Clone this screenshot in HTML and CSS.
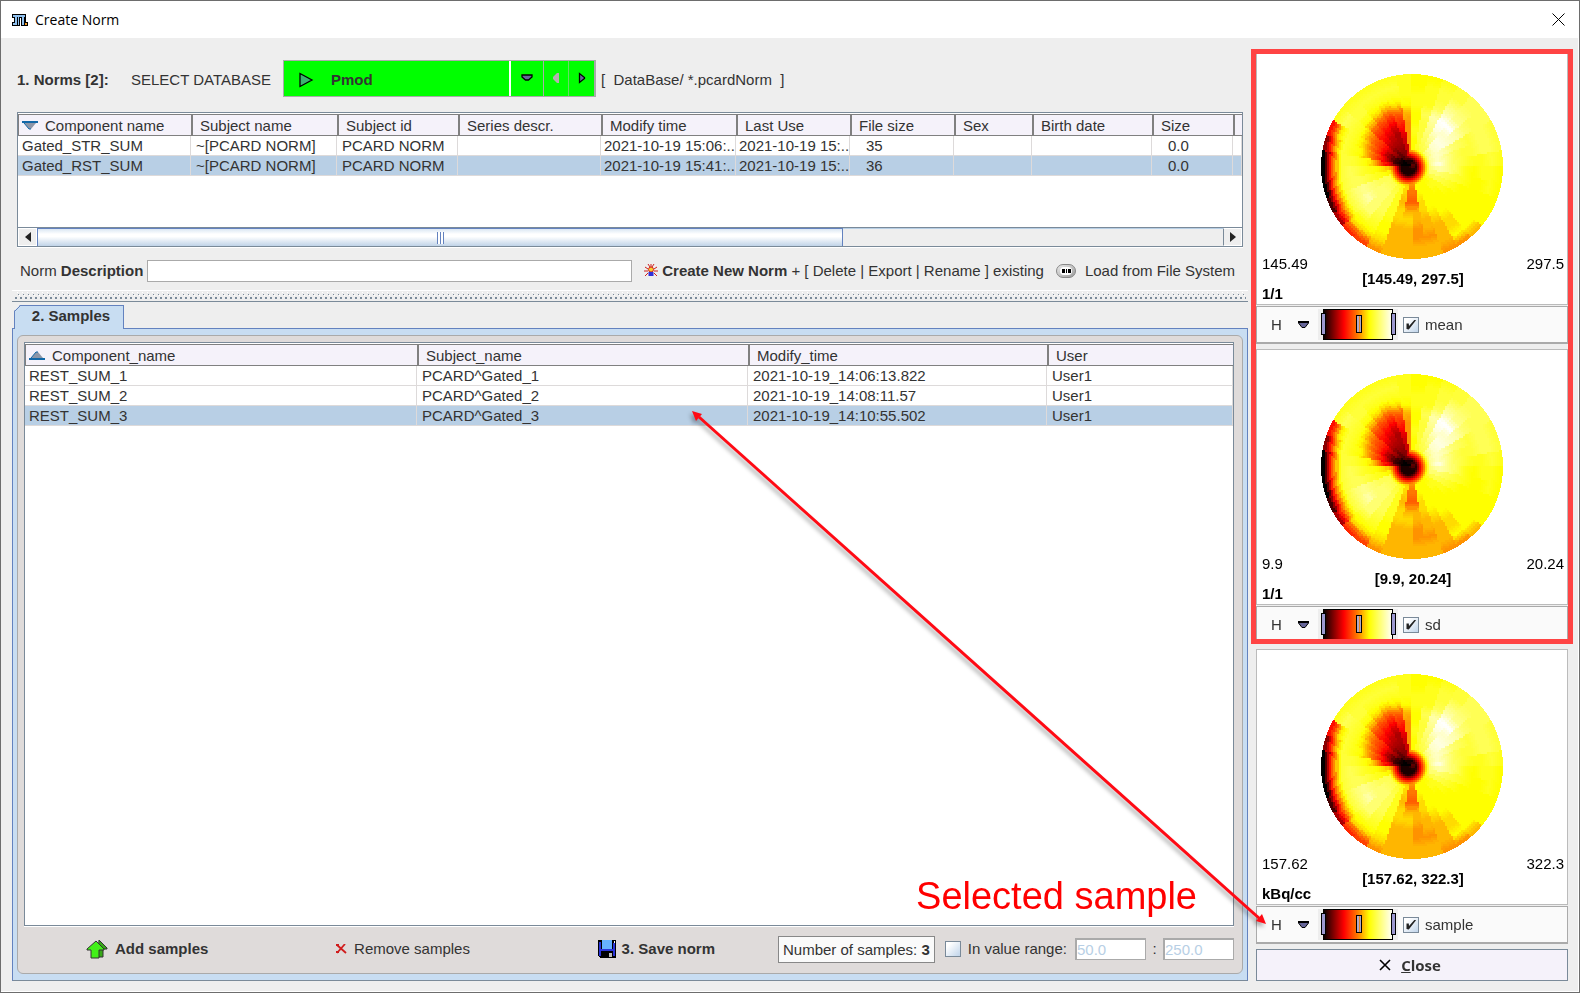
FILE: index.html
```html
<!DOCTYPE html>
<html lang="en">
<head>
<meta charset="utf-8">
<title>Create Norm</title>
<link rel="stylesheet" href="styles.css">
</head>
<body>
<div class="window">
  <header class="titlebar">
    <svg class="app-icon" width="16" height="12" viewBox="0 0 16 12" shape-rendering="crispEdges"><path d="M0 0h14v8h2v4H9V4H8v8H0V8h2V4H0z" fill="#000"/><path d="M1 1h12v2H1zM3 3h2v6H3zM1 9h4v2H1zM6 3h1v8H6zM10 3h2v8h-2z" fill="#8fc0ee"/><path d="M13 9h2v2h-2z" fill="#f59a23"/></svg>
    <h1 class="title">Create Norm</h1>
    <button class="window-close" aria-label="Close window"><svg width="13" height="13" viewBox="0 0 13 13"><path d="M.5.5l12 12M12.500.5l-12 12" stroke="#000" fill="none"/></svg></button>
  </header>

  <div class="content">
    <main class="left">
      <section class="norms">
        <div class="db-row">
          <strong class="norms-label">1. Norms [2]:</strong>
          <span class="db-label">SELECT DATABASE</span>
          <div class="db-picker">
            <button class="db-name"><svg width="15" height="16" viewBox="0 0 15 16"><path d="M1 1.500L13 8 1 14.500z" fill="#3cb371" stroke="#000" stroke-width="1.300"/></svg>Pmod</button>
            <button class="db-drop" aria-label="Choose database"><svg width="12" height="8" viewBox="0 0 12 8"><path d="M1 1h10v2L7.500 6h-3L1 3z" fill="#666699" stroke="#000" stroke-width="1.300"/></svg></button>
            <button class="db-prev" aria-label="Previous"><svg width="8" height="12" viewBox="0 0 8 12"><path d="M7 1v10H5L1 7V5l4-4z" fill="#b5b0b0"/></svg></button>
            <button class="db-next" aria-label="Next"><svg width="8" height="12" viewBox="0 0 8 12"><path d="M1.500 1.500v9l5-4v-1z" fill="#666699" stroke="#000" stroke-width="1.300"/></svg></button>
          </div>
          <span class="db-path">[&nbsp; DataBase/ *.pcardNorm&nbsp; ]</span>
        </div>

        <div class="table-box norm-box">
          <table class="grid">
            <colgroup><col class="w-173"><col class="w-146"><col class="w-121"><col class="w-143"><col class="w-135"><col class="w-114"><col class="w-104"><col class="w-78"><col class="w-120"><col class="w-81"><col></colgroup>
            <thead><tr><th><svg class="sort" width="16" height="9" viewBox="0 0 16 9"><path d="M0 0h16v2H0z" fill="#1268a8"/><path d="M2 2h12L9 8H7z" fill="#8c96a8"/><path d="M2 2l5 6h2" fill="none" stroke="#1268a8"/></svg>Component name</th><th>Subject name</th><th>Subject id</th><th>Series descr.</th><th>Modify time</th><th>Last Use</th><th>File size</th><th>Sex</th><th>Birth date</th><th>Size</th><th></th></tr></thead>
            <tbody>
              <tr><td>Gated_STR_SUM</td><td>~[PCARD NORM]</td><td>PCARD NORM</td><td></td><td class="time">2021-10-19 15:06:..</td><td class="time">2021-10-19 15:..</td><td class="num">35</td><td></td><td></td><td class="num">0.0</td><td></td></tr>
              <tr class="selected"><td>Gated_RST_SUM</td><td>~[PCARD NORM]</td><td>PCARD NORM</td><td></td><td class="time">2021-10-19 15:41:..</td><td class="time">2021-10-19 15:..</td><td class="num">36</td><td></td><td></td><td class="num">0.0</td><td></td></tr>
            </tbody>
          </table>
          <div class="scrollbar">
            <button class="scroll-btn" aria-label="Scroll left"><svg width="6" height="10" viewBox="0 0 6 10"><path d="M6 0v10L0 5z" fill="#222"/></svg></button>
            <div class="scroll-track"><div class="scroll-thumb"><span class="grip"></span></div></div>
            <button class="scroll-btn scroll-end" aria-label="Scroll right"><svg width="6" height="10" viewBox="0 0 6 10"><path d="M0 0v10l6-5z" fill="#222"/></svg></button>
          </div>
        </div>

        <div class="desc-row">
          <label for="desc">Norm <b>Description</b></label>
          <input id="desc" class="text-input desc-input" type="text">
          <button class="plain create"><svg width="14" height="13" viewBox="0 0 14 13"><path d="M4 0l2 3M10 0L8 3M7 0v3M1 3l3 2M13 3l-3 2M0 7h4M14 7h-4M1 12l3-3M13 12l-3-3" stroke="#d0201c"/><circle cx="7" cy="5.500" r="2.500" fill="#f8d030" stroke="#d0201c"/><path d="M4.500 8h5v4h-5z" fill="#3230d8"/></svg><b>Create New Norm</b> + [ Delete | Export | Rename ] existing</button>
          <button class="plain load"><svg width="20" height="14" viewBox="0 0 20 14"><defs><linearGradient id="pill" x2="1" y2="1"><stop stop-color="#eee"/><stop offset="1" stop-color="#999"/></linearGradient></defs><rect x=".5" y=".5" width="19" height="13" rx="6.500" fill="url(#pill)" stroke="#888"/><rect x="4" y="3" width="12" height="8" rx="4" fill="#fff"/><path d="M6 5h3v4H6zM10 5h1v4h-1zM12 5h3v4h-3z" fill="#000"/></svg>Load from File System</button>
        </div>
      </section>

      <svg class="splitter" width="100%" height="12" aria-hidden="true" shape-rendering="crispEdges"><defs><pattern id="dots" width="5" height="8" patternUnits="userSpaceOnUse" y="2"><path d="M0 0h1v1H0zM2 3h1v1H2z" fill="#fff"/><path d="M1 2h1v1H1zM3 5h2v2H3z" fill="#7a8a99"/></pattern></defs><rect width="100%" height="1" fill="#fff"/><rect x="3" y="2" width="99.600%" height="8" fill="url(#dots)"/><rect y="11" width="100%" height="1" fill="#7a8a99"/></svg>

      <section class="samples">
        <div class="tabs" role="tablist"><button class="tab" role="tab" aria-selected="true">2. Samples<svg class="tab-corner" width="7" height="7" viewBox="0 0 7 7"><path d="M0 0h6L0 6z" fill="#eee"/><path d="M0 7l7-7" stroke="#6382bf"/></svg></button></div>
        <div class="tab-pane">
          <div class="panel">
            <div class="table-box sample-box">
              <table class="grid">
                <colgroup><col class="w-392"><col class="w-331"><col class="w-299"><col></colgroup>
                <thead><tr><th><svg class="sort" width="16" height="9" viewBox="0 0 16 9"><path d="M0 7h16v2H0z" fill="#1268a8"/><path d="M2 7l5-6h2l5 6z" fill="#8c96a8"/><path d="M2 7l5-6h2" fill="none" stroke="#1268a8"/></svg>Component_name</th><th>Subject_name</th><th>Modify_time</th><th>User</th></tr></thead>
                <tbody>
                  <tr><td>REST_SUM_1</td><td>PCARD^Gated_1</td><td>2021-10-19_14:06:13.822</td><td>User1</td></tr>
                  <tr><td>REST_SUM_2</td><td>PCARD^Gated_2</td><td>2021-10-19_14:08:11.57</td><td>User1</td></tr>
                  <tr class="selected"><td>REST_SUM_3</td><td>PCARD^Gated_3</td><td>2021-10-19_14:10:55.502</td><td>User1</td></tr>
                </tbody>
              </table>
            </div>
            <div class="actions">
              <button class="plain add"><svg width="22" height="20" viewBox="0 0 22 20"><path d="M13 1l8 8v1h-4v8h-5z" fill="#38a818" stroke="#333"/><path d="M10 2L1 10v1h4v8h8v-8h5v-1z" fill="#42f018" stroke="#333"/></svg><b>Add samples</b></button>
              <button class="plain remove"><svg width="12" height="10" viewBox="0 0 12 10"><path d="M1 1l9 8" stroke="#d01c1c" stroke-width="1.800"/><path d="M9 0L1 9" stroke="#d01c1c" stroke-width="1.800"/><path d="M0 7h3v2H0zM0 0h3v2H0z" fill="#d01c1c"/></svg>Remove samples</button>
              <button class="plain save"><svg width="18" height="18" viewBox="0 0 18 18" shape-rendering="crispEdges"><path d="M0 0h18v18H2l-2-2z" fill="#000"/><path d="M1 2h2v14H1zM15 3h2v13h-2zM3 9h12v2H3z" fill="#2b35d8"/><path d="M4 0h10v9H4z" fill="#66b2ff"/><path d="M16 1h1v2h-1z" fill="#fff"/><path d="M11 13h3v4h-3z" fill="#bbb"/></svg><b>3. Save norm</b></button>
              <span class="count">Number of samples: <b>3</b></span>
              <label class="range-label"><input class="check" type="checkbox">In value range:</label>
              <input class="text-input limit" type="text" value="50.0" aria-label="Lower limit" disabled>
              <span class="colon">:</span>
              <input class="text-input limit" type="text" value="250.0" aria-label="Upper limit" disabled>
            </div>
          </div>
        </div>
      </section>
    </main>

    <aside class="side">
      <section class="view">
        <div class="plot"><canvas class="polar" width="182" height="185" role="img" aria-label="Polar plot, mean"></canvas>
          <div class="limits"><span>145.49</span><span>297.5</span></div><b class="interval">[145.49, 297.5]</b><b class="unit">1/1</b></div>
        <div class="controls"><button class="hist">H</button><button class="more" aria-label="Colour table"><svg width="11" height="7" viewBox="0 0 11 7"><path d="M.5.500h10v1.500L7 6.500H4L.5 2z" fill="#666699" stroke="#000"/><path d="M0 0h11v2H0z"/></svg></button>
          <div class="lut"><input class="end" type="range" value="0" aria-label="Minimum"><input class="mid" type="range" value="50" aria-label="Centre"><input class="end" type="range" value="100" aria-label="Maximum"></div>
          <label class="view-label"><input class="check" type="checkbox" checked>mean</label></div>
      </section>
      <section class="view">
        <div class="plot"><canvas class="polar" width="182" height="185" role="img" aria-label="Polar plot, standard deviation"></canvas>
          <div class="limits"><span>9.9</span><span>20.24</span></div><b class="interval">[9.9, 20.24]</b><b class="unit">1/1</b></div>
        <div class="controls"><button class="hist">H</button><button class="more" aria-label="Colour table"><svg width="11" height="7" viewBox="0 0 11 7"><path d="M.5.500h10v1.500L7 6.500H4L.5 2z" fill="#666699" stroke="#000"/><path d="M0 0h11v2H0z"/></svg></button>
          <div class="lut"><input class="end" type="range" value="0" aria-label="Minimum"><input class="mid" type="range" value="50" aria-label="Centre"><input class="end" type="range" value="100" aria-label="Maximum"></div>
          <label class="view-label"><input class="check" type="checkbox" checked>sd</label></div>
      </section>
      <section class="view">
        <div class="plot"><canvas class="polar" width="182" height="185" role="img" aria-label="Polar plot, sample"></canvas>
          <div class="limits"><span>157.62</span><span>322.3</span></div><b class="interval">[157.62, 322.3]</b><b class="unit">kBq/cc</b></div>
        <div class="controls"><button class="hist">H</button><button class="more" aria-label="Colour table"><svg width="11" height="7" viewBox="0 0 11 7"><path d="M.5.500h10v1.500L7 6.500H4L.5 2z" fill="#666699" stroke="#000"/><path d="M0 0h11v2H0z"/></svg></button>
          <div class="lut"><input class="end" type="range" value="0" aria-label="Minimum"><input class="mid" type="range" value="50" aria-label="Centre"><input class="end" type="range" value="100" aria-label="Maximum"></div>
          <label class="view-label"><input class="check" type="checkbox" checked>sample</label></div>
      </section>
      <button class="close-btn"><svg width="12" height="12" viewBox="0 0 12 12"><path d="M1 1l10 10M11 1L1 11" stroke="#000" stroke-width="1.600"/></svg><span><u>C</u>lose</span></button>
      <div class="highlight"></div>
      <svg class="pointer" width="580" height="520" viewBox="0 0 580 520" aria-hidden="true"><path d="M10 8L571 510" stroke="#ff0a14" stroke-width="3"/><path d="M3 2l10 3-6 7zM577 515l-10-3 6-7z" fill="#ff0a14"/></svg>
      <span class="note">Selected sample</span>
    </aside>
  </div>
</div>
<script src="polar.js"></script>
</body>
</html>
```
FILE: styles.css
```css
* { box-sizing: border-box; }
body {
  margin: 0;
  background: #eee;
  color: #333;
  font: 15px/20px "Liberation Sans", Arial, sans-serif;
}
button, input { font: inherit; color: inherit; margin: 0; }
button { padding: 0; border: 0; background: none; }
svg { display: block; flex: none; }

.window {
  display: flex;
  flex-direction: column;
  min-height: 100vh;
  border: 1px solid #6d6d6d;
  background: #eee;
  box-shadow: inset -1px -1px #fff;
}
.titlebar {
  display: flex;
  align-items: center;
  height: 37px;
  padding: 0 14px 0 11px;
  background: #fff;
}
.title {
  flex: 1;
  margin: 0 0 0 7px;
  color: #000;
  font: 14px/20px "Open Sans", "Noto Sans", sans-serif;
}
.content {
  flex: 1;
  display: flex;
  gap: 8px;
  padding: 11px;
}
.left { flex: 1; min-width: 0; display: flex; flex-direction: column; }
.norms { padding: 0 5px; }

.db-row { display: flex; align-items: center; height: 38px; margin: 10px 0 15px; }
.norms-label { width: 114px; padding-top: 3px; white-space: nowrap; }
.db-label { width: 152px; padding-top: 3px; white-space: nowrap; }
.db-picker {
  display: flex;
  height: 37px;
  border: 1px solid #aaa;
  border-right-width: 2px;
  background: #0f0;
}
.db-name { display: flex; align-items: center; width: 227px; padding: 3px 0 0 15px; gap: 17px; font-weight: bold; border-right: 2px solid #fff; }
.db-drop { width: 33px; display: grid; place-items: center; border-right: 1px solid #aaa; }
.db-prev, .db-next { width: 25px; display: grid; place-items: center; }
.db-prev { border-right: 1px solid #6d6; }
.db-path { margin-left: 5px; padding-top: 3px; white-space: nowrap; }

.table-box {
  display: flex;
  flex-direction: column;
  border: 1px solid #7a8a99;
  padding-top: 1px;
  background: #fff;
  box-shadow: 0 1px 0 #fff;
}
.norm-box { height: 135px; }
.grid { width: 100%; table-layout: fixed; border-collapse: separate; border-spacing: 0; }
.grid th {
  height: 22px;
  padding: 1px 0 0 7px;
  border: solid #808080;
  border-width: 1px 0 1px 2px;
  background: #f5f2fa;
  font-weight: normal;
  line-height: 19px;
  text-align: left;
  white-space: nowrap;
}
.grid th:first-child { padding-left: 3px; border-left-width: 1px; }
.grid td {
  height: 20px;
  padding: 0 0 0 5px;
  border: solid #dddada;
  border-width: 0 1px 1px 0;
  line-height: 19px;
  white-space: nowrap;
  overflow: hidden;
}
.grid td:first-child { padding-left: 4px; }
.grid td.time { padding-left: 3px; }
.grid td.num { padding-left: 16px; }
.selected td { background: #b8cfe5; }
.sort { display: inline-block; margin-right: 7px; vertical-align: 1px; }
.w-173 { width: 173px; }
.w-146 { width: 146px; }
.w-121 { width: 121px; }
.w-143 { width: 143px; }
.w-135 { width: 135px; }
.w-114 { width: 114px; }
.w-104 { width: 104px; }
.w-78 { width: 78px; }
.w-120 { width: 120px; }
.w-81 { width: 81px; }
.w-392 { width: 392px; }
.w-331 { width: 331px; }
.w-299 { width: 299px; }

.scrollbar { display: flex; height: 19px; margin-top: auto; border-top: 1px solid #7a8a99; background: #eee; }
.scroll-btn { flex: none; width: 19px; display: grid; place-items: center; border: 1px solid #fff; }
.scroll-btn.scroll-end { border-left-color: #7a8a99; }
.scroll-track { flex: 1; border-top: 1px solid #b8cfe5; }
.scroll-thumb {
  display: grid;
  place-items: center;
  width: 68%;
  height: 18px;
  margin-top: -1px;
  border: solid #6382bf;
  border-width: 1px 1px 0;
  background: linear-gradient(#dbe7f3, #fff 30%, #fff 45%, #c0d3e8);
}
.grip { width: 7px; height: 12px; background: repeating-linear-gradient(90deg, #6382bf 0 1px, #fff 1px 3px); }

.desc-row { display: flex; align-items: center; height: 43px; padding: 4px 8px 0 3px; white-space: nowrap; }
.text-input { height: 22px; border: 1px solid #aaa; border-radius: 0; padding: 0; background: #fff; }
.desc-input { flex: 1; min-width: 0; margin: 0 12px 0 4px; }
.plain { display: flex; align-items: center; white-space: pre; }
.create svg { margin-right: 4px; }
.load { margin-left: 12px; }
.load svg { margin-right: 9px; }

.samples { flex: 1; display: flex; flex-direction: column; padding-top: 3px; }
.tabs { display: flex; height: 23px; padding-left: 2px; }
.tab {
  position: relative;
  width: 110px;
  height: 24px;
  padding: 0 0 3px 4px;
  border: 1px solid #6382bf;
  border-bottom: 0;
  background: #c8ddf2;
  font-weight: bold;
}
.tab-corner { position: absolute; left: -1px; top: -1px; }
.tab-pane { flex: 1; display: flex; padding: 6px 4px 6px; border: 1px solid #6382bf; border-bottom-color: #7a8a99; background: #c8ddf2; }
.panel { flex: 1; display: flex; flex-direction: column; padding: 6px 8px 0 6px; border: 1px solid #aaa; border-radius: 6px; background: #dfdbda; }
.sample-box { flex: 1; }
.actions { display: flex; align-items: center; height: 47px; padding-bottom: 1px; white-space: nowrap; }
.add { margin-left: 62px; }
.add svg { margin-right: 7px; }
.remove { margin-left: auto; }
.remove svg { margin-right: 6px; }
.save { margin-left: auto; }
.save svg { margin-right: 6px; }
.count { height: 27px; margin-left: 63px; padding: 0 4px; border: 1px solid #888; background: #fafafa; line-height: 25px; }
.range-label { display: flex; align-items: center; gap: 7px; margin: 0 8px 0 10px; }
.limit { width: 71px; border-width: 2px 1px 1px 2px; }
.limit:disabled { color: #b8cfe5; background: #fff; }
.colon { width: 17px; text-align: center; }

.check {
  appearance: none;
  display: grid;
  place-items: center;
  width: 16px;
  height: 16px;
  border: 1px solid #7a8a99;
  background: linear-gradient(135deg, #fff 20%, #c0d4ea);
}
.check:checked::before {
  content: "";
  width: 10px;
  height: 10px;
  background: #222;
  clip-path: polygon(5% 40%, 28% 40%, 30% 65%, 88% 0, 100% 8%, 28% 100%, 5% 96%);
}

.side { position: relative; width: 312px; display: flex; flex-direction: column; }
.view { margin-bottom: 5px; }
.plot {
  display: flex;
  flex-direction: column;
  height: 256px;
  padding: 0 3px 0 5px;
  border: 1px solid #bbb;
  background: #fff;
  color: #000;
}
.polar { margin: 24px 0 0 59px; width: 182px; height: 185px; }
.limits { display: flex; justify-content: space-between; line-height: 16px; margin-top: -3px; }
.interval { margin-top: -1px; text-align: center; line-height: 16px; }
.unit { margin-top: -1px; line-height: 16px; }
.controls { display: flex; align-items: center; height: 38px; margin-top: 1px; border: 1px solid #aaa; border-bottom-width: 2px; background: #fafafa; }
.hist { width: 11px; margin-left: 14px; }
.more { margin: 0 9px 0 16px; }
.lut {
  position: relative;
  width: 80px;
  height: 31px;
  border: solid #eee;
  border-width: 0 5px;
  background: linear-gradient(90deg, #000, #f00 30%, #ff8000 50%, #ff0 66%, #fff) padding-box;
  box-shadow: inset 0 1px #000, inset 0 -1px #000, inset -1px 0 #000;
}
.lut input {
  appearance: none;
  position: absolute;
  left: -2px;
  top: 4px;
  width: 75px;
  height: 22px;
  background: none;
  pointer-events: none;
}
.lut input::-webkit-slider-thumb {
  appearance: none;
  width: 5px;
  height: 22px;
  border: 1px solid #000;
  background: #9c98d0;
  pointer-events: auto;
}
.lut .mid::-webkit-slider-thumb {
  width: 6px;
  height: 18px;
  background: linear-gradient(90deg, #b0a8c8 50%, #e88820 50% 75%, #b0a8c8 75%);
}
.view-label { display: flex; align-items: center; gap: 6px; margin-left: 5px; }
.close-btn {
  display: flex;
  align-items: center;
  justify-content: center;
  gap: 10px;
  height: 32px;
  padding-right: 4px;
  border: 1px solid #7a8a99;
  background: #f5f2fa;
  font: bold 15px/20px "Open Sans", "Noto Sans", sans-serif;
}
.highlight { position: absolute; left: -5px; right: -5px; top: 0; height: 595px; border: 5px solid #ff4444; pointer-events: none; }
.pointer { position: absolute; right: 299px; top: 360px; filter: drop-shadow(-2px 3px 2px rgba(0, 0, 0, .35)); pointer-events: none; }
.note { position: absolute; right: 371px; top: 825px; color: #f00; font-size: 38px; line-height: 44px; white-space: nowrap; pointer-events: none; }
```
FILE: polar.js
```javascript
// One string per 10 degree sector, clockwise from the top; each letter is the
// uptake (a = lowest, z = highest) at radius 0, 0.1 ... 1.0.
const sectors = [
  "qqqqrqqrrqq", "qqrssstrrrq", "qrstuvwtssr", "qrsuwyzwuss", "qsuxyxzvutt",
  "qsuxyxwuttt", "qsvxwutstts", "qsvxvtsstts", "qsvyvtsrrsr", "qsuwvtrqrrq",
  "qsuutsrqqrq", "qrstsrqqqqq", "qqrrrqqqqqq", "qqqrqqqqqqo", "qqqqqqqppqn",
  "qqqqqqpooon", "qqqqppoonoo", "nnnmloonnoo", "nnnmlopoooo", "ooppoppoooo",
  "qqqrrrrqqpn", "qqrstttsrpk", "qrstuuuurpj", "qrstuuwusnf", "qrsttuvusmc",
  "dlpqrsttsma", "bgmpqrstsla", "aaeinqrssla", "aacgknqrsne", "aacfjmprspi",
  "aaegjlorstr", "acdfhjmqssr", "adefgilprsr", "aeeffhkorsr", "ahgghjlprsr",
  "ionnnnoqrrr"
];
const stops = [[0, 0, 0, 0], [0.3, 255, 0, 0], [0.5, 255, 128, 0], [0.64, 255, 255, 0], [1, 255, 255, 255]];

function colour(v) {
  let i = 1;
  while (i < stops.length - 1 && v > stops[i][0]) i++;
  const a = stops[i - 1], b = stops[i];
  const t = Math.min(1, (v - a[0]) / (b[0] - a[0]));
  return [1, 2, 3].map(k => a[k] + (b[k] - a[k]) * t);
}

function uptake(sector, radius) {
  const row = sectors[sector];
  const p = Math.min(9.999, radius * 10.3);
  const i = Math.floor(p);
  const a = row.charCodeAt(i) - 97, b = row.charCodeAt(i + 1) - 97;
  return (a + (b - a) * (p - i)) / 25;
}

// The cold apex, slightly left of the centre, with a warmer core.
function apex(dx, dy) {
  const core = 0.14 - Math.hypot(dx - 0.01, dy + 0.01) * 2.5;
  const d = Math.hypot(dx + 0.04, dy - 0.01);
  return Math.max(core, d < 0.08 ? 0.03 : 0.03 + (d - 0.08) * 5);
}

document.querySelectorAll(".polar").forEach(canvas => {
  const ctx = canvas.getContext("2d");
  const w = canvas.width, h = canvas.height;
  for (let y = 0; y < h; y += 1) {
    for (let x = 0; x < w; x += 1) {
      const dx = (x + 0.5 - w / 2) / (w / 2), dy = (y + 0.5 - h / 2) / (h / 2);
      const r = Math.hypot(dx, dy);
      if (r > 1) continue;
      const bx = (Math.floor(x / 2) * 2 + 1 - w / 2) / (w / 2);
      const by = (Math.floor(y / 2) * 2 + 1 - h / 2) / (h / 2);
      const angle = (Math.atan2(bx, -by) * 180 / Math.PI + 360) % 360;
      const ring = Math.round(Math.min(1, Math.hypot(bx, by)) * 40) / 40;
      const c = colour(Math.min(uptake(Math.floor(angle / 10), ring), apex(bx, by)));
      ctx.fillStyle = `rgb(${c.map(Math.round).join(",")})`;
      ctx.fillRect(x, y, 1, 1);
    }
  }
});
```
